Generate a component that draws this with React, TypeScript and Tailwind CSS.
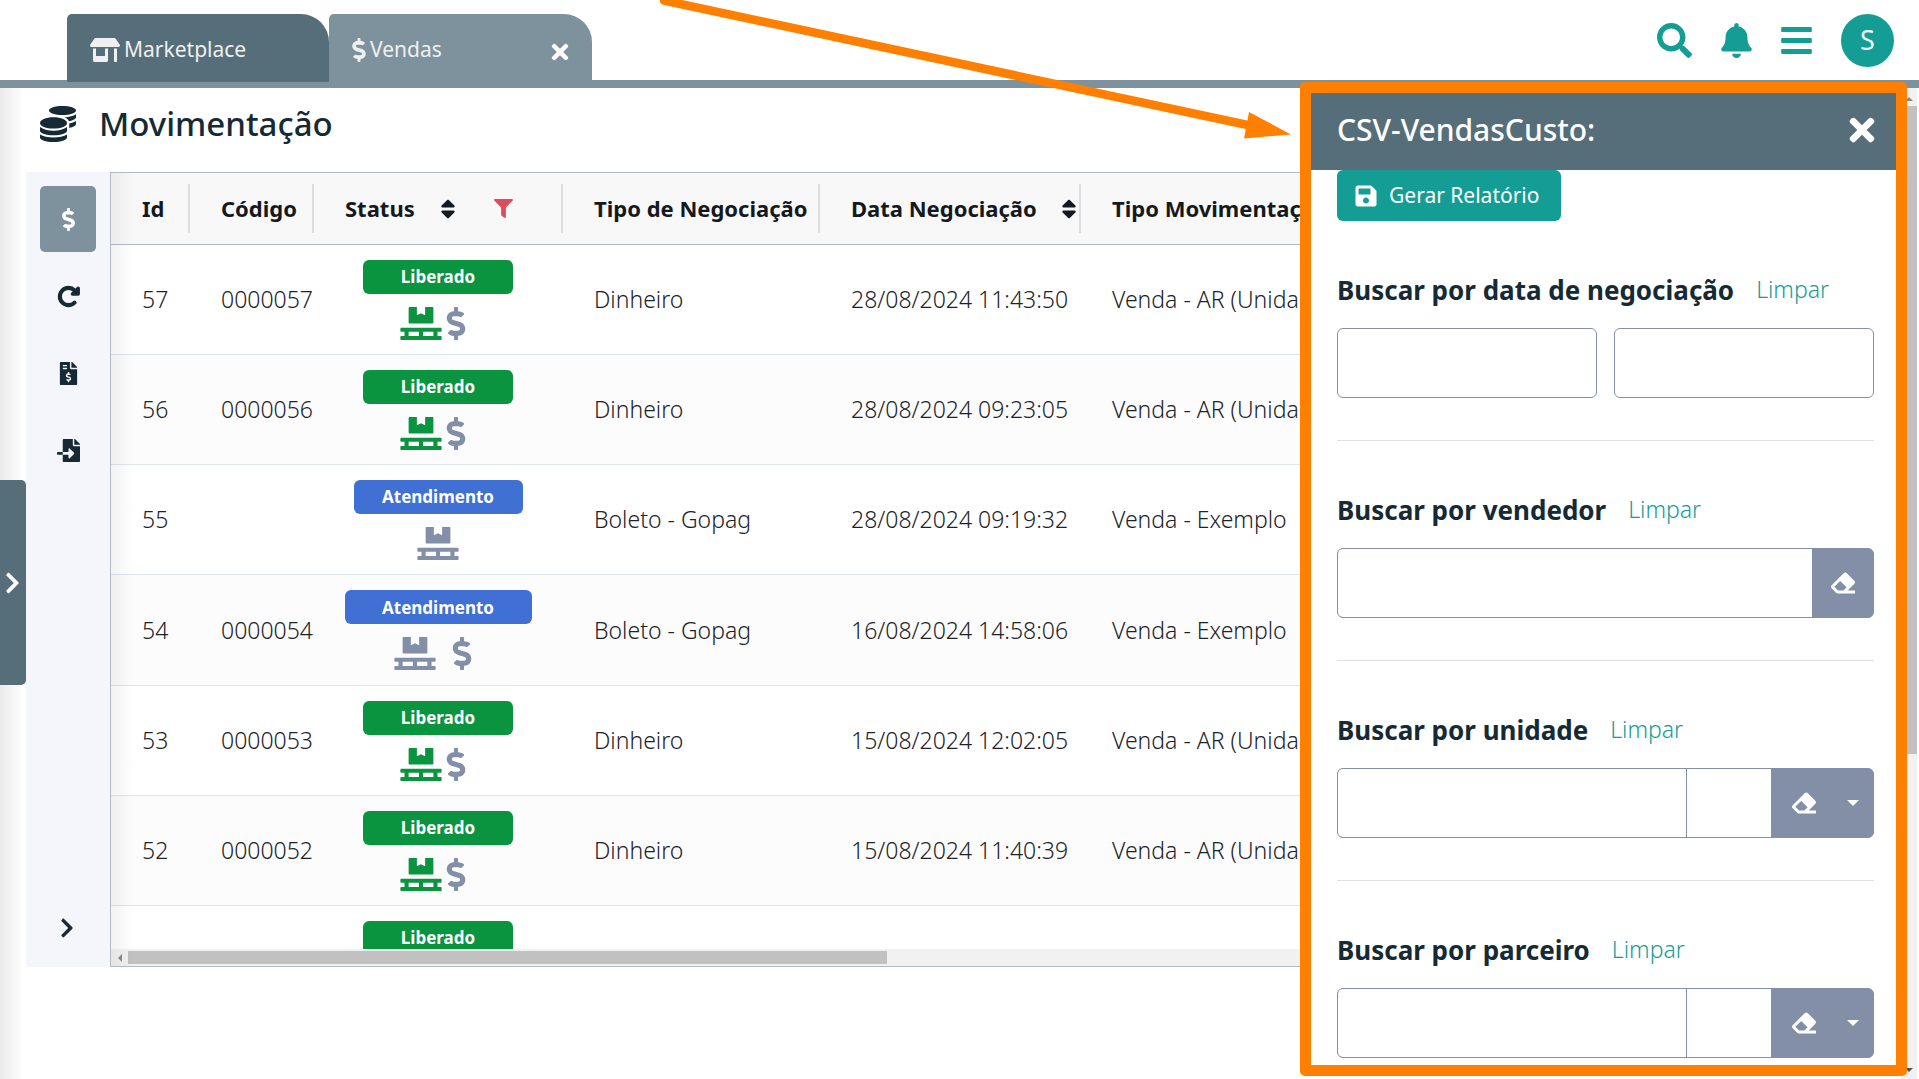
import React from "react";
import {
  FaBars,
  FaBell,
  FaChevronRight,
  FaCoins,
  FaDollarSign,
  FaEraser,
  FaFileImport,
  FaFileInvoiceDollar,
  FaFilter,
  FaPallet,
  FaSave,
  FaSearch,
  FaSort,
  FaStoreAlt,
  FaTimes,
} from "react-icons/fa";
import { FaRotateRight } from "react-icons/fa6";

type Row = {
  id: string;
  code: string;
  status: "Liberado" | "Atendimento";
  badge: string;
  icons: "released" | "pallet" | "spaced";
  deal: string;
  date: string;
  move: string;
};

const GREEN_BADGE = "w-[150px] bg-[#0a9440]";

const rows: Row[] = [
  { id: "57", code: "0000057", status: "Liberado", badge: GREEN_BADGE, icons: "released", deal: "Dinheiro", date: "28/08/2024 11:43:50", move: "Venda - AR (Unidade)" },
  { id: "56", code: "0000056", status: "Liberado", badge: GREEN_BADGE, icons: "released", deal: "Dinheiro", date: "28/08/2024 09:23:05", move: "Venda - AR (Unidade)" },
  { id: "55", code: "", status: "Atendimento", badge: "w-[169px] bg-[#4070d4]", icons: "pallet", deal: "Boleto - Gopag", date: "28/08/2024 09:19:32", move: "Venda - Exemplo" },
  { id: "54", code: "0000054", status: "Atendimento", badge: "w-[187px] bg-[#4070d4]", icons: "spaced", deal: "Boleto - Gopag", date: "16/08/2024 14:58:06", move: "Venda - Exemplo" },
  { id: "53", code: "0000053", status: "Liberado", badge: GREEN_BADGE, icons: "released", deal: "Dinheiro", date: "15/08/2024 12:02:05", move: "Venda - AR (Unidade)" },
  { id: "52", code: "0000052", status: "Liberado", badge: GREEN_BADGE, icons: "released", deal: "Dinheiro", date: "15/08/2024 11:40:39", move: "Venda - AR (Unidade)" },
  { id: "", code: "", status: "Liberado", badge: GREEN_BADGE, icons: "released", deal: "", date: "", move: "" },
];

function TopBar() {
  return (
    <header className="flex h-[88px] shrink-0 justify-between border-b-8 border-[#7d929d] bg-white pl-[67px] pr-[25px]">
      <nav className="flex items-start pt-[14px] text-[21px] text-[#f0f0f0]">
        <button className="z-10 flex h-[68px] w-[262px] items-center gap-1 rounded-tl-[5px] rounded-tr-[28px] bg-[#566e79] pt-1 pl-[23px]">
          <FaStoreAlt className="h-6 w-[30px]" />
          <span>Marketplace</span>
        </button>
        <div className="flex h-[68px] w-[263px] items-center justify-between rounded-tl-[5px] rounded-tr-[28px] bg-[#7d929d] pt-1 pr-[20px] pl-[23px]">
          <button className="flex items-center gap-1">
            <FaDollarSign className="h-6 w-[14px]" />
            <span>Vendas</span>
          </button>
          <button aria-label="Fechar Vendas" className="pt-1 text-white">
            <FaTimes className="size-6" viewBox="-40 0 432 512" />
          </button>
        </div>
      </nav>
      <div className="flex items-start gap-[29px] pt-[14px] text-[#149d94]">
        <button aria-label="Pesquisar" className="pt-[9px]">
          <FaSearch className="size-[35px]" />
        </button>
        <button aria-label="Notificações" className="pt-[9px]">
          <FaBell className="h-[35px] w-[31px]" />
        </button>
        <button aria-label="Menu" className="pt-[9px]">
          <FaBars className="h-[35px] w-[31px]" />
        </button>
        <button className="size-[53px] rounded-full bg-[#149d94] text-[27px] text-[#eefafa]">S</button>
      </div>
    </header>
  );
}

function SideNav() {
  const item = "flex h-[66px] w-[56px] items-center justify-center rounded-[5px]";
  return (
    <nav className="flex w-[84px] shrink-0 flex-col items-center gap-[11px] bg-[#f5f6fb] pt-[14px] text-[23px] text-[#152a35]">
      <button aria-label="Vendas" className="flex h-[66px] w-[56px] items-center justify-center rounded-[5px] bg-[#7d929d] text-white">
        <FaDollarSign />
      </button>
      <button aria-label="Atualizar" className={item}>
        <FaRotateRight className="overflow-visible" strokeWidth={28} />
      </button>
      <button aria-label="Faturas" className={item}>
        <FaFileInvoiceDollar />
      </button>
      <button aria-label="Importar" className={item}>
        <FaFileImport />
      </button>
      <button aria-label="Expandir" className="mt-auto mr-[2px] mb-[28px] text-[22px]">
        <FaChevronRight />
      </button>
    </nav>
  );
}

function HeadCell({ children, width, last }: { children: React.ReactNode; width?: string; last?: boolean }) {
  return (
    <th className={width}>
      <div className={last ? "flex h-[49px] items-center pl-[31px]" : "flex h-[49px] items-center border-r-2 border-[#dcdee2] pl-[31px]"}>
        {children}
      </div>
    </th>
  );
}

function StatusIcons({ kind }: { kind: Row["icons"] }) {
  if (kind === "pallet") {
    return <FaPallet className="h-[33px] w-[42px] text-[#828fa7]" />;
  }
  if (kind === "spaced") {
    return (
      <div className="flex gap-4 pr-2.5 text-[#828fa7]">
        <FaPallet className="h-[33px] w-[42px]" />
        <FaDollarSign className="h-[33px] w-5" />
      </div>
    );
  }
  return (
    <div className="flex gap-1 pr-2.5">
      <FaPallet className="h-[33px] w-[42px] text-[#0a9440]" />
      <FaDollarSign className="h-[33px] w-5 text-[#828fa7]" />
    </div>
  );
}

function MovesTable() {
  return (
    <section className="relative flex min-w-0 flex-1 flex-col border border-r-0 border-[#b4bac5] bg-white">
      <div className="min-h-0 flex-1 overflow-hidden">
        <table className="w-[2090px] table-fixed border-separate border-spacing-0 text-left">
          <thead className="text-[22px] text-[#14191f]">
            <tr className="h-[72px] bg-[#f8f8f8] *:border-b *:border-[#b4bac5] *:p-0 *:font-bold">
              <HeadCell width="w-[79px]">Id</HeadCell>
              <HeadCell width="w-[124px]">Código</HeadCell>
              <HeadCell width="w-[249px]">
                Status
                <FaSort className="ml-[21px] size-[24px]" />
                <FaFilter className="ml-[34px] size-[19px] text-[#e04a5f]" />
              </HeadCell>
              <HeadCell width="w-[257px]">
                <span className="whitespace-nowrap">Tipo de Negociação</span>
              </HeadCell>
              <HeadCell width="w-[261px]">
                <span className="whitespace-nowrap">Data Negociação</span>
                <FaSort className="ml-[20px] size-[24px] shrink-0" />
              </HeadCell>
              <HeadCell last>Tipo Movimentação</HeadCell>
            </tr>
          </thead>
          <tbody className="text-[23px] font-light text-[#1b2329]">
            {rows.map((r, i) => (
              <tr
                key={i}
                className="h-[110px] even:bg-[#fcfcfc] nth-[4n]:h-[111px] *:whitespace-nowrap *:border-b *:border-[#e0e5ec] *:p-0 *:pl-[31px]"
              >
                <td>{r.id}</td>
                <td>{r.code}</td>
                <td className="pl-0!">
                  <div className="flex flex-col items-center gap-[13px] pr-px">
                    <span className={`flex h-[34px] items-center justify-center rounded-md pt-px text-[17px] font-bold text-white ${r.badge}`}>
                      {r.status}
                    </span>
                    <StatusIcons kind={r.icons} />
                  </div>
                </td>
                <td>{r.deal}</td>
                <td>{r.date}</td>
                <td>{r.move}</td>
              </tr>
            ))}
          </tbody>
        </table>
      </div>
      <div className="flex h-[17px] shrink-0 items-center bg-[#f1f1f1]">
        <span className="flex w-[17px] justify-center">
          <span className="border-y-4 border-r-4 border-y-transparent border-r-[#8a8a8a]" />
        </span>
        <span className="h-[13px] w-[759px] bg-[#c1c1c1]" />
      </div>
      <div className="pointer-events-none absolute inset-y-0 left-0 w-6 bg-gradient-to-r from-black/5 to-transparent" />
    </section>
  );
}

function EraseButton({ alone }: { alone?: boolean }) {
  return (
    <button
      aria-label="Apagar"
      className={alone ? "flex w-[61px] items-center justify-center text-white" : "flex w-[66px] items-center justify-center text-white"}
    >
      <FaEraser className="size-6" />
    </button>
  );
}

function SearchField({ label, pair }: { label: string; pair?: boolean }) {
  return (
    <div className="flex h-[70px] overflow-hidden rounded-md border border-[#828fa7] bg-[#828fa7]">
      <input aria-label={label} className="min-w-0 flex-1 bg-white px-4 text-[22px] outline-none" />
      {pair && (
        <input aria-label={`${label} (código)`} className="w-[85px] border-l border-[#828fa7] bg-white px-4 text-[22px] outline-none" />
      )}
      <EraseButton alone={!pair} />
      {pair && (
        <button aria-label="Mais opções" className="flex w-9 items-center justify-center">
          <span className="mr-1 border-x-6 border-t-6 border-x-transparent border-t-white" />
        </button>
      )}
    </div>
  );
}

function FilterSection({ title, children, last }: { title: string; children: React.ReactNode; last?: boolean }) {
  return (
    <section className={last ? "pt-[49px]" : "border-b border-[#dde0e8] pt-[49px] pb-[42px]"}>
      <div className="mb-[18px] flex h-10 items-center gap-[22px]">
        <h3 className="text-[26px] font-bold text-[#152a35]">{title}</h3>
        <a href="#" className="pb-[2px] text-[23px] font-light text-[#149d94]">
          Limpar
        </a>
      </div>
      {children}
    </section>
  );
}

function ReportPanel() {
  const dateInput = "h-[70px] min-w-0 rounded-md border border-[#828fa7] bg-white px-4 text-[22px] outline-none";
  return (
    <aside className="absolute top-[82px] right-3 bottom-[3px] z-20 flex w-[607px] flex-col overflow-hidden rounded-[5px] border-[11px] border-[#ff8000] bg-white">
      <div className="flex h-[77px] shrink-0 items-center justify-between bg-[#566e79] pb-1 pl-[26px] pr-[21px] text-white">
        <h2 className="text-[30px] font-medium">CSV-VendasCusto:</h2>
        <button aria-label="Fechar painel">
          <FaTimes className="h-[36px] w-[26px]" />
        </button>
      </div>
      <div className="min-h-0 flex-1 overflow-hidden pl-[26px] pr-[22px]">
        <button className="flex h-[51px] items-center gap-[11px] rounded-md bg-[#149d94] px-[17px] text-[21px] text-white">
          <FaSave className="size-6" viewBox="-32 0 512 512" />
          <span className="pr-1">Gerar Relatório</span>
        </button>
        <FilterSection title="Buscar por data de negociação">
          <div className="grid grid-cols-2 gap-[17px]">
            <input aria-label="Data inicial" className={dateInput} />
            <input aria-label="Data final" className={dateInput} />
          </div>
        </FilterSection>
        <FilterSection title="Buscar por vendedor">
          <SearchField label="Vendedor" />
        </FilterSection>
        <FilterSection title="Buscar por unidade">
          <SearchField label="Unidade" pair />
        </FilterSection>
        <FilterSection title="Buscar por parceiro" last>
          <SearchField label="Parceiro" pair />
        </FilterSection>
      </div>
    </aside>
  );
}

function PageScrollbar() {
  return (
    <div className="mr-[2px] flex w-4 shrink-0 flex-col items-end bg-[#f1f1f1]">
      <span className="flex h-[18px] items-center pr-1 pt-1">
        <span className="border-x-4 border-b-4 border-x-transparent border-b-[#8a8a8a]" />
      </span>
      <span className="h-[648px] w-3 bg-[#c1c1c1]" />
      <span className="mt-auto flex h-[18px] items-center pr-1">
        <span className="border-x-4 border-t-4 border-x-transparent border-t-[#505050]" />
      </span>
    </div>
  );
}

export default function App() {
  return (
    <div className="relative flex h-screen flex-col overflow-hidden bg-white font-['Noto_Sans',sans-serif]">
      <TopBar />
      <div className="relative flex min-h-0 flex-1">
        <main className="flex min-w-0 flex-1 flex-col pb-[112px] pl-[26px]">
          <div className="flex h-[84px] shrink-0 items-start gap-[23px] pt-[13px] pl-[14px] text-[#152a35]">
            <FaCoins className="mt-[5px] size-9" />
            <h1 className="text-[33px] leading-[46px] font-medium">Movimentação</h1>
          </div>
          <div className="flex min-h-0 flex-1">
            <SideNav />
            <MovesTable />
          </div>
        </main>
        <PageScrollbar />
        <div className="pointer-events-none absolute inset-y-0 left-0 w-6 bg-gradient-to-r from-black/8 to-transparent" />
        <button
          aria-label="Abrir menu lateral"
          className="absolute top-[392px] left-0 flex h-[205px] w-[26px] items-center justify-center rounded-r-[5px] bg-[#566e79] pr-[2px] text-white"
        >
          <FaChevronRight className="h-6 w-[15px]" />
        </button>
      </div>
      <ReportPanel />
      <svg className="pointer-events-none absolute top-0 left-[650px] z-30 h-[150px] w-[650px]" viewBox="650 0 650 150" fill="#ff8000">
        <path d="M664 .5L1250 125.5" stroke="#ff8000" strokeWidth="8.6" strokeLinecap="round" />
        <path d="M1249 112L1291 134.500L1244 138.500Z" />
      </svg>
    </div>
  );
}
